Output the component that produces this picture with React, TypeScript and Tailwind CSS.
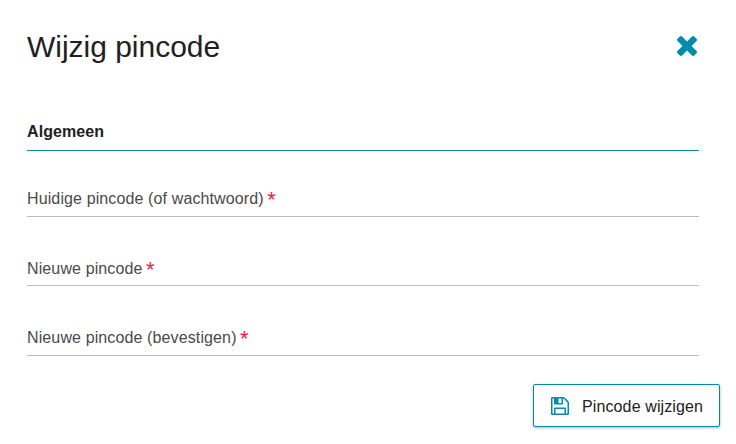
import clsx from "clsx";

interface IconProps {
  className?: string;
}

function CloseIcon({ className }: IconProps) {
  return (
    <svg viewBox="302 366 1188 1188" fill="currentColor" aria-hidden="true" className={className}>
      <path d="M1490 1322q0 40-28 68l-136 136q-28 28-68 28t-68-28l-294-294-294 294q-28 28-68 28t-68-28l-136-136q-28-28-28-68t28-68l294-294-294-294q-28-28-28-68t28-68l136-136q28-28 68-28t68 28l294 294 294-294q28-28 68-28t68 28l136 136q28 28 28 68t-28 68l-294 294 294 294q28 28 28 68z" />
    </svg>
  );
}

function SaveIcon({ className }: IconProps) {
  return (
    <svg viewBox="128 128 1536 1536" fill="currentColor" aria-hidden="true" className={className}>
      <path d="M512 1536h768v-384h-768v384zm896 0h128v-896q0-14-10-38.500t-20-34.500l-281-281q-10-10-34-20t-39-10v416q0 40-28 68t-68 28h-576q-40 0-68-28t-28-68v-416h-128v1280h128v-416q0-40 28-68t68-28h832q40 0 68 28t28 68v416zm-384-928v-320q0-13-9.500-22.500t-22.500-9.500h-192q-13 0-22.500 9.500t-9.500 22.500v320q0 13 9.500 22.500t22.500 9.500h192q13 0 22.500-9.500t9.500-22.500zm640 32v928q0 40-28 68t-68 28h-1344q-40 0-68-28t-28-68v-1344q0-40 28-68t68-28h928q40 0 88 20t76 48l280 280q28 28 48 76t20 88z" />
    </svg>
  );
}

interface FieldProps {
  label: string;
  className?: string;
}

// Required field with the label resting on the underline
function Field({ label, className }: FieldProps) {
  return (
    <div className={clsx("flex items-start border-b border-[#bdbdbd] text-base leading-6 text-[#4a4a4a]", className)}>
      <span className="tracking-[0.12px]">{label}</span>
      <span className="ml-[3.5px] text-[22px] leading-[25px] text-[#ff1744]">*</span>
    </div>
  );
}

export default function App() {
  return (
    <main className="h-[444px] w-full bg-white font-['Liberation_Sans',Arial,sans-serif] text-[#212121]">
      <section className="pl-[27px] pr-[37px]">
        <header className="flex items-start justify-between pt-[29px]">
          <h1 className="text-[30px] leading-9 tracking-[-0.02px]">Wijzig pincode</h1>
          <button type="button" aria-label="Sluiten" className="mt-[7px] mr-0.5 text-[#008cab]">
            <CloseIcon className="size-5" />
          </button>
        </header>

        <h2 className="mt-[55px] h-[31px] border-b border-[#008cab] text-base leading-6 font-bold tracking-[0.08px]">
          Algemeen
        </h2>

        <Field label="Huidige pincode (of wachtwoord)" className="mt-9 h-[30px]" />
        <Field label="Nieuwe pincode" className="mt-10 h-[29px]" />
        <Field label="Nieuwe pincode (bevestigen)" className="mt-10 h-[30px]" />
      </section>

      <footer className="mt-7 flex justify-end pr-4">
        <button
          type="button"
          className="flex h-[43px] w-[187px] items-center rounded-xs border border-[#008cab] bg-white pl-[17px] text-base shadow-[0_1px_3px_rgba(0,0,0,0.3)]"
        >
          <SaveIcon className="size-[18px] text-[#008cab]" />
          <span className="ml-[13px] pt-0.5 tracking-[0.12px]">Pincode wijzigen</span>
        </button>
      </footer>
    </main>
  );
}
